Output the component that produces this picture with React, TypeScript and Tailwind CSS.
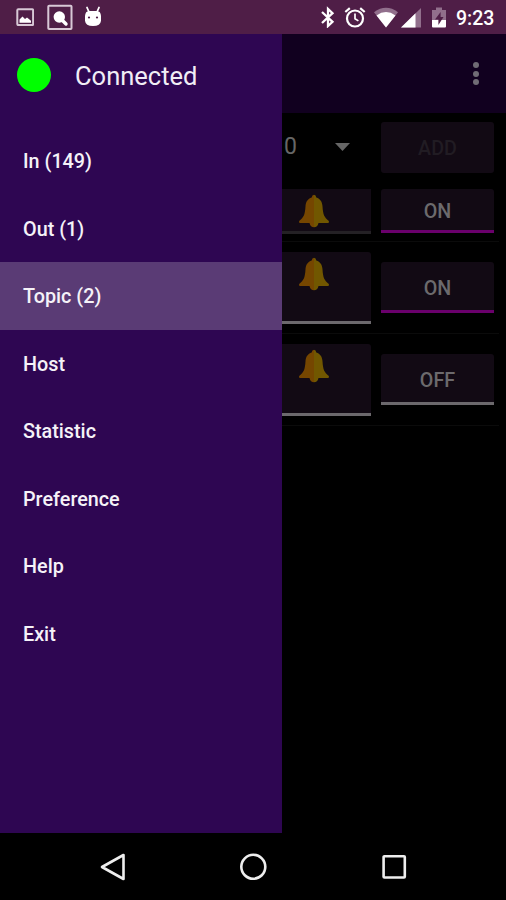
import React from "react";
import { clsx } from "clsx";

const MENU = [
  "In (149)",
  "Out (1)",
  "Topic (2)",
  "Host",
  "Statistic",
  "Preference",
  "Help",
  "Exit",
];

function StatusBar() {
  return (
    <header className="flex h-[34px] shrink-0 items-center bg-[#4f1e47] text-white">
      <svg className="ml-4 h-[18px] w-[18px] shrink-0" viewBox="0 0 18 18">
        <rect x="1.3" y="1.3" width="15.8" height="15.8" rx="1" fill="none" stroke="#d8c8d6" strokeWidth="2" />
        <path d="M3.500 14.800v-3.300l3-3 2.500 2.500 2-1.500 4 3.300v2z" fill="#fff" />
      </svg>
      <svg className="ml-[13px] h-[26px] w-[26px] shrink-0" viewBox="0 0 26 26">
        <rect x="1.300" y="1.800" width="23.200" height="23.200" rx="0.8" fill="none" stroke="#d8c8d6" strokeWidth="2" />
        <circle cx="12.300" cy="13" r="5.700" fill="#fff" />
        <path d="M15.500 16.500l3.500 3.500" stroke="#fff" strokeWidth="3.400" strokeLinecap="round" />
      </svg>
      <svg className="ml-[10px] h-[22px] w-5 shrink-0" viewBox="0 0 20 22">
        <path d="M4 1.500l2.200 5M16 1.500l-2.200 5" stroke="#fff" strokeWidth="1.800" strokeLinecap="round" />
        <path d="M2 10Q2.300 5.200 6 5h8q3.700.2 4 5v4.800q-.5 5.200-8 5.200t-8-5.200z" fill="#fff" />
        <circle cx="6" cy="11.500" r="1.100" fill="#4f1e47" />
        <circle cx="14" cy="11.500" r="1.100" fill="#4f1e47" />
      </svg>

      <svg className="ml-auto h-[22px] w-4 shrink-0" viewBox="0 0 16 22">
        <path d="M2 6l10.500 9.800L8 20V3l4.500 4.200L2 17" fill="none" stroke="#fff" strokeWidth="2.300" />
      </svg>
      <svg className="ml-2 h-[22px] w-[22px] shrink-0" viewBox="0 0 22 22">
        <circle cx="11" cy="12.500" r="8" fill="none" stroke="#fff" strokeWidth="2.200" />
        <path d="M11 7.500v5.200l3.400 2.200" fill="none" stroke="#fff" strokeWidth="1.700" />
        <path d="M1.300 6l4.500-3.800M20.700 6l-4.500-3.800" stroke="#fff" strokeWidth="2.200" />
      </svg>
      <svg className="ml-2 h-[22px] w-6 shrink-0" viewBox="0 0 24 22">
        <path d="M0 6.200Q12-2.600 24 6.200L12 21.500z" fill="#916f8c" />
        <path d="M2.500 9.400q9.500-6.800 19 0L12 21.500z" fill="#fff" />
      </svg>
      <svg className="ml-[3px] h-[22px] w-5 shrink-0" viewBox="0 0 20 22">
        <path d="M0 21.500L20 2v19.500z" fill="#916f8c" />
        <path d="M0 21.500L14.500 7.300v14.200z" fill="#fff" />
      </svg>
      <svg className="ml-[11px] h-[22px] w-[14px] shrink-0" viewBox="0 0 14 22">
        <path d="M0 4h4V1.500h6V4h4v10H0z" fill="#916f8c" />
        <path d="M0 14h14v6.500q0 1-1 1H1q-1 0-1-1z" fill="#fff" />
        <path d="M8.600 6L3 13.500h3.400v5.400L11.500 11H8.600z" fill="#4f1e47" />
      </svg>
      <span className="mr-3 ml-[10px] w-[38px] pt-[3px] text-[19.5px] leading-6 font-medium whitespace-nowrap">9:23</span>
    </header>
  );
}

function Drawer() {
  return (
    <aside className="flex w-[282px] shrink-0 flex-col bg-[#2e0652]">
      <div className="flex h-[93px] items-start pt-6 pl-[17px]">
        <span className="h-[34px] w-[34px] rounded-full bg-[#00ff00]" />
        <span className="ml-6 text-[25.5px] leading-9 text-[#f1edf5]">Connected</span>
      </div>
      <nav>
        {MENU.map((label) => (
          <div
            key={label}
            className={clsx(
              "flex h-[67.5px] items-center pt-[3px] pl-[23px] text-[19.8px] font-medium text-[#f5f2f8]",
              label === "Topic (2)" && "bg-[#5a3b75]"
            )}
          >
            {label}
          </div>
        ))}
      </nav>
    </aside>
  );
}

function Bell() {
  return (
    <svg className="h-[34px] w-8" viewBox="0 0 32 34">
      <path d="M16 .8q2 0 2.300 2.600c4 1.200 5.900 4.300 6.200 8.800.5 8.500 1.800 11 6.100 14.500q1.200 2-.8 2.200H20.500q-1 4.300-4.500 4.300z" fill="#715700" />
      <path d="M16 .8q-2 0-2.300 2.600c-4 1.200-5.900 4.300-6.200 8.800-.5 8.500-1.800 11-6.100 14.500q-1.200 2 .8 2.200H11.500q1 4.300 4.500 4.300z" fill="#754600" />
    </svg>
  );
}

function Toggle({ label, on, className }: { label: string; on?: boolean; className: string }) {
  return (
    <div
      className={clsx(
        "ml-[10px] flex w-[113px] items-center justify-center rounded-t-[3px] border-b-[3px] bg-[#120a14] text-[19.7px] font-medium text-[#6c6a6d]",
        on ? "border-[#6a006c]" : "border-[#6c696d]",
        className
      )}
    >
      {label}
    </div>
  );
}

function Content() {
  return (
    <main className="flex grow flex-col bg-black">
      <div className="flex h-[79px] shrink-0 flex-col items-end justify-center gap-[2.5px] bg-[#11001f] pr-[27px]">
        <span className="h-1.5 w-1.5 rounded-full bg-[#706c75]" />
        <span className="h-1.5 w-1.5 rounded-full bg-[#706c75]" />
        <span className="h-1.5 w-1.5 rounded-full bg-[#706c75]" />
      </div>

      <div className="flex h-[68px] items-center pl-[2px]">
        <span className="w-[51px] pt-px text-[23px] text-[#666]">0</span>
        <svg className="h-2 w-[15px]" viewBox="0 0 15 8">
          <path d="M0 0h15L7.500 8z" fill="#666" />
        </svg>
        <div className="ml-[31px] flex h-[51px] w-[113px] items-center justify-center rounded-[3px] bg-[#120a14] pt-[3px] text-[19.7px] font-medium text-[#211c23]">
          ADD
        </div>
      </div>

      <div className="mr-[7px] flex h-[61px] items-start border-b border-[#0b0b0b] pt-2">
        <div className="flex h-[45px] w-[89px] justify-center border-b-[3px] border-[#242125] bg-[#120a14] pt-[5px] pr-[25px]">
          <Bell />
        </div>
        <Toggle label="ON" on className="h-11 pt-[5px]" />
      </div>

      {[true, false].map((on) => (
        <div key={String(on)} className="mr-[7px] flex h-[92px] items-center border-b border-[#0b0b0b]">
          <div className="mt-px flex h-[72px] w-[89px] justify-center rounded-tr-[3px] border-b-[3px] border-[#6c696d] bg-[#120a14] pt-[5px] pr-[25px]">
            <Bell />
          </div>
          <Toggle label={on ? "ON" : "OFF"} on={on} className="h-[51px] pt-[6px]" />
        </div>
      ))}
    </main>
  );
}

function NavBar() {
  return (
    <footer className="flex h-[67px] shrink-0 items-center justify-center gap-[113px] bg-black">
      <svg className="h-7 w-7" viewBox="0 0 28 28" fill="none" stroke="#eee" strokeWidth="2.600">
        <path d="M25.500 2v24L4 14z" strokeLinejoin="round" />
      </svg>
      <svg className="h-7 w-7" viewBox="0 0 28 28" fill="none" stroke="#eee" strokeWidth="2.600">
        <circle cx="14.300" cy="13.800" r="12" />
      </svg>
      <svg className="h-7 w-7" viewBox="0 0 28 28" fill="none" stroke="#eee" strokeWidth="2.600">
        <rect x="3.600" y="3.300" width="21.200" height="21.200" rx="0.800" />
      </svg>
    </footer>
  );
}

export default function App() {
  return (
    <div className="flex h-[900px] w-[506px] flex-col overflow-hidden bg-black font-['Roboto',sans-serif]">
      <StatusBar />
      <div className="flex min-h-0 grow">
        <Drawer />
        <Content />
      </div>
      <NavBar />
    </div>
  );
}
